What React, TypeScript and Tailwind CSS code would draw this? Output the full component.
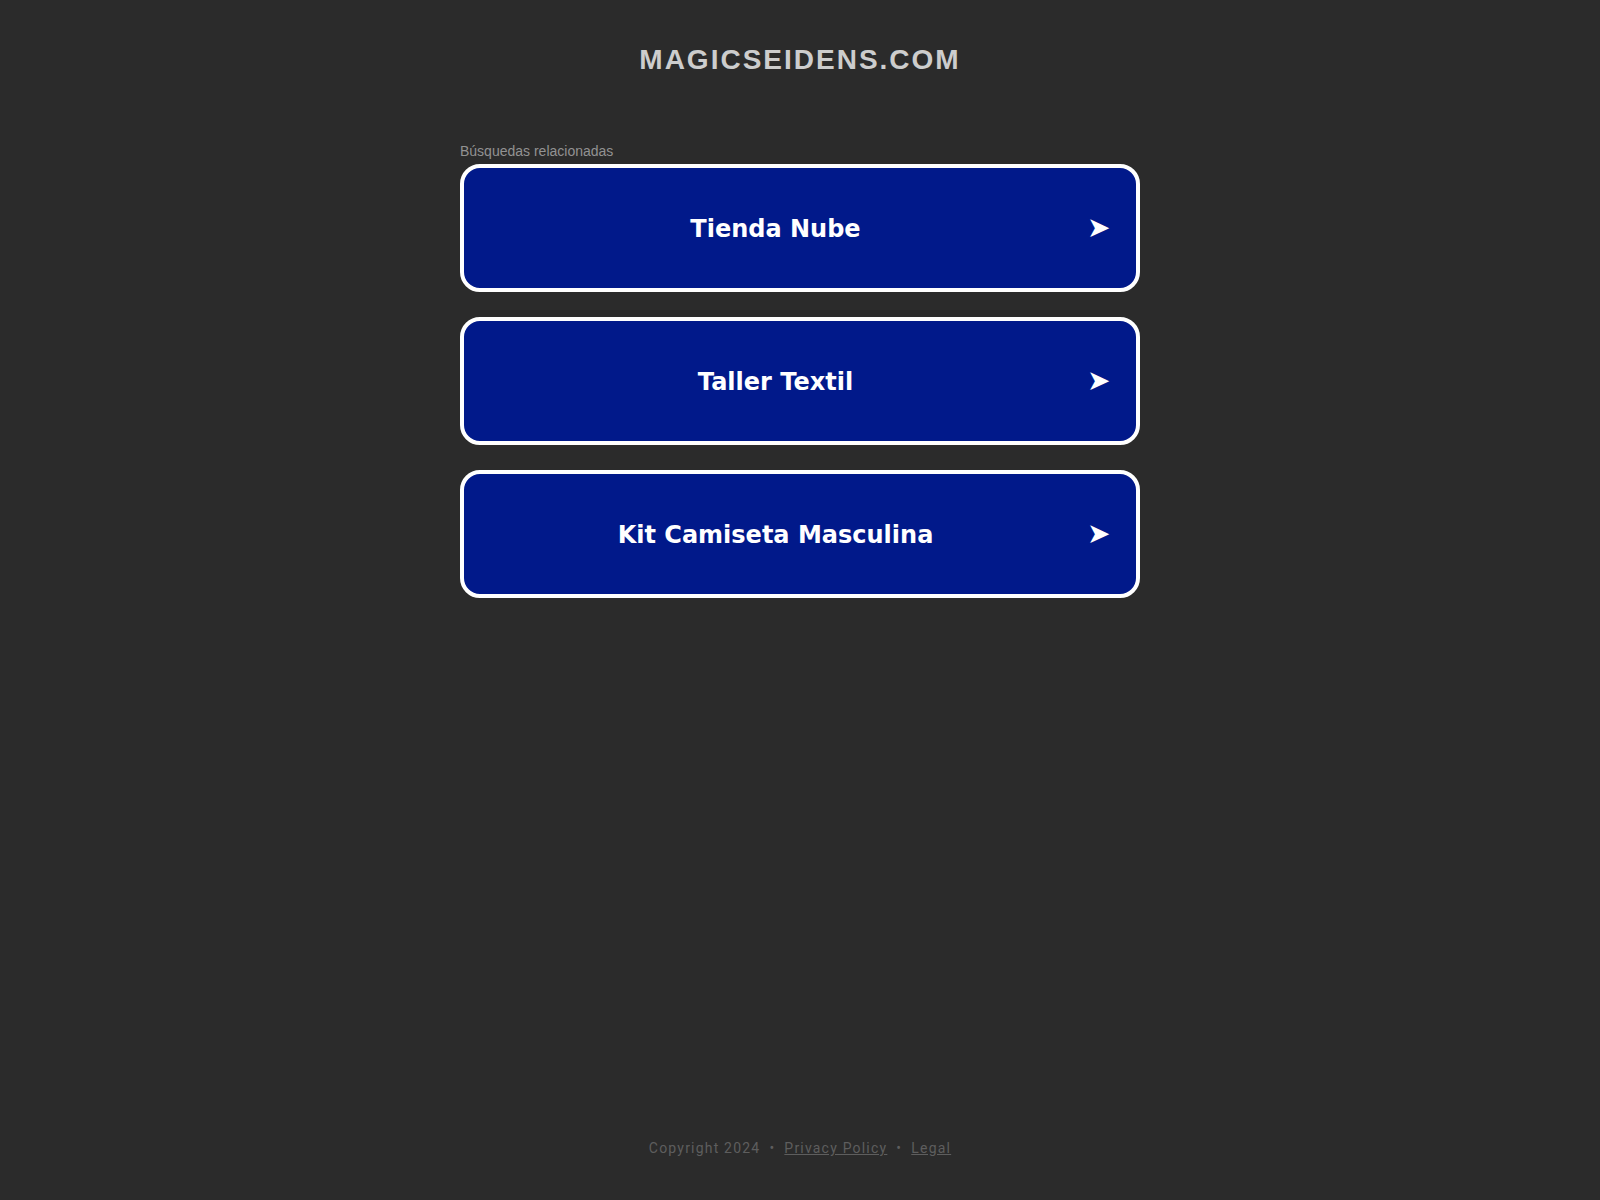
const searches = ["Tienda Nube", "Taller Textil", "Kit Camiseta Masculina"]

function SearchCard({ label }: { label: string }) {
  return (
    <a
      href="#"
      className="flex h-[128px] items-center rounded-[20px] border-4 border-white bg-[#01198a] pr-[27px] text-white no-underline"
    >
      <span className="mt-[2px] flex-1 text-center font-['DejaVu_Sans',Verdana,sans-serif] text-[24px] font-bold leading-[30px]">
        {label}
      </span>
      <span className="w-[22px] text-center font-['DejaVu_Sans',sans-serif] text-[28px] leading-[30px]">➤</span>
    </a>
  )
}

export default function App() {
  return (
    <div className="flex min-h-[1200px] flex-col bg-[#2b2b2b] font-['Liberation_Sans',Arial,sans-serif]">
      <h1 className="pt-[44px] text-center text-[28px] font-bold leading-[32px] tracking-[2px] text-[#cdcdcd]">
        MAGICSEIDENS.COM
      </h1>

      <div className="mx-auto mt-[67px] w-[680px]">
        <p className="mb-[5px] text-[14px] leading-[16px] text-[#929292]">Búsquedas relacionadas</p>
        <div className="flex flex-col gap-[25px]">
          {searches.map((s) => (
            <SearchCard key={s} label={s} />
          ))}
        </div>
      </div>

      <footer className="mt-auto flex justify-center pb-[42px] font-['Roboto',Arial,sans-serif] text-[14px] leading-[20px] tracking-[1.2px] text-[#5e5e5e]">
        <span>Copyright 2024</span>
        <span className="mx-[9px]">•</span>
        <a href="#" className="underline">Privacy Policy</a>
        <span className="mx-[9px]">•</span>
        <a href="#" className="underline">Legal</a>
      </footer>
    </div>
  )
}
